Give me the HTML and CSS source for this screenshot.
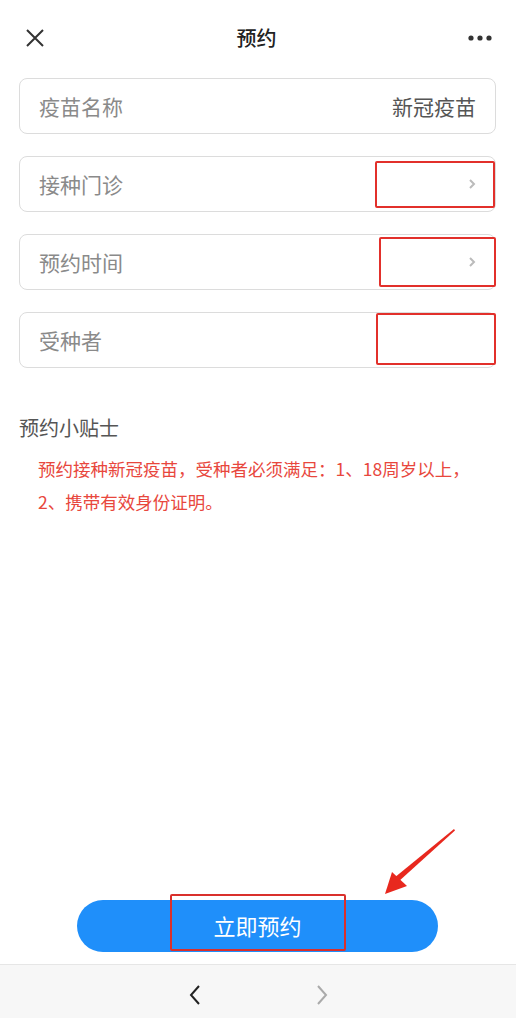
FILE: index.html
```html
<!DOCTYPE html>
<html lang="zh">
<head>
<meta charset="utf-8">
<title>预约</title>
<link rel="stylesheet" href="styles.css">
</head>
<body>
<div class="page">
  <header class="topbar">
    <svg class="icon-close" width="20" height="20" viewBox="0 0 20 20"><path d="M2 2L18 18M18 2L2 18" stroke="#333" stroke-width="2" fill="none"/></svg>
    <h1 class="title">预约</h1>
    <svg class="icon-more" width="24" height="6" viewBox="0 0 24 6"><circle cx="3" cy="3" r="2.6" fill="#333"/><circle cx="12" cy="3" r="2.6" fill="#333"/><circle cx="21" cy="3" r="2.6" fill="#333"/></svg>
  </header>

  <main class="form">
    <div class="field">
      <span class="label">疫苗名称</span>
      <span class="value">新冠疫苗</span>
    </div>
    <div class="field">
      <span class="label">接种门诊</span>
      <svg class="chev" width="8" height="12" viewBox="0 0 8 12"><path d="M2 2L6 6L2 10" stroke="#bbb" stroke-width="2" fill="none"/></svg>
      <span class="mark mark-1"></span>
    </div>
    <div class="field">
      <span class="label">预约时间</span>
      <svg class="chev" width="8" height="12" viewBox="0 0 8 12"><path d="M2 2L6 6L2 10" stroke="#bbb" stroke-width="2" fill="none"/></svg>
      <span class="mark mark-2"></span>
    </div>
    <div class="field">
      <span class="label">受种者</span>
      <span class="mark mark-3"></span>
    </div>

    <section class="tips">
      <h2 class="tips-title">预约小贴士</h2>
      <p class="tips-text">预约接种新冠疫苗，受种者必须满足：1、18周岁以上，<br>2、携带有效身份证明。</p>
    </section>
  </main>

  <div class="action">
    <svg class="arrow" width="80" height="76" viewBox="0 0 80 76">
      <path d="M74 5L75 6.5L18 58L14 54Z" fill="#e8281e"/>
      <path d="M5 70L12 48L27 62Z" fill="#e8281e"/>
    </svg>
    <button class="submit">立即预约<span class="mark mark-btn"></span></button>
  </div>

  <footer class="navbar">
    <svg width="14" height="22" viewBox="0 0 14 22"><path d="M11 2L3 11L11 20" stroke="#222" stroke-width="2" fill="none"/></svg>
    <svg width="14" height="22" viewBox="0 0 14 22"><path d="M3 2L11 11L3 20" stroke="#aaa" stroke-width="2" fill="none"/></svg>
  </footer>
</div>
</body>
</html>
```

FILE: styles.css
```css
* { box-sizing: border-box; }
html, body { margin: 0; padding: 0; background: #fff; }
body {
  font-family: "Noto Sans CJK SC", "Noto Sans", "Liberation Sans", sans-serif;
  width: 516px;
  height: 1018px;
  overflow: hidden;
}
.page {
  height: 1018px;
  display: flex;
  flex-direction: column;
}
.topbar {
  height: 78px;
  display: flex;
  align-items: center;
  justify-content: space-between;
  padding: 0 24px 2px 25px;
  flex: none;
}
.title {
  margin: 0;
  font-size: 20px;
  font-weight: 500;
  color: #222;
  line-height: 1;
}
.form {
  display: flex;
  flex-direction: column;
  gap: 22px;
  padding: 0 20px 0 19px;
  flex: 1;
}
.field {
  position: relative;
  height: 56px;
  border: 1px solid #dcdcdc;
  border-radius: 8px;
  display: flex;
  align-items: center;
  justify-content: space-between;
  padding: 0 19px 0 19px;
}
.label {
  font-size: 21px;
  color: #8a8a8a;
  line-height: 1;
}
.value {
  font-size: 21px;
  color: #555;
  line-height: 1;
}
.mark {
  position: absolute;
  border: 2px solid #e2302b;
  border-radius: 2px;
}
.mark-1 { left: 355px; top: 4px; width: 120px; height: 47px; }
.mark-2 { left: 359px; top: 2px; width: 117px; height: 50px; }
.mark-3 { left: 356px; top: 0px; width: 120px; height: 52px; }
.tips { padding-top: 25px; }
.tips-title {
  margin: 0;
  font-size: 20px;
  font-weight: 400;
  color: #555;
  line-height: 26px;
}
.tips-text {
  margin: 11px 0 0 19px;
  font-size: 17.5px;
  color: #e8473d;
  line-height: 33px;
}
.action {
  position: relative;
  display: flex;
  justify-content: center;
  padding: 0 78px 12px 77px;
  flex: none;
}
.submit {
  position: relative;
  width: 361px;
  height: 52px;
  border: none;
  border-radius: 26px;
  background: #1f8ffa;
  color: #fff;
  font-family: inherit;
  font-size: 22px;
  padding: 0 0 2px 0;
}
.mark-btn { left: 93px; top: -6px; width: 176px; height: 57px; border-color: #d9302c; }
.arrow {
  position: absolute;
  left: 380px;
  top: -76px;
}
.navbar {
  height: 54px;
  flex: none;
  background: #f7f7f7;
  border-top: 1px solid #e6e6e6;
  display: flex;
  justify-content: center;
  align-items: center;
  gap: 113px;
  padding: 6px 0 0 0;
}
```
